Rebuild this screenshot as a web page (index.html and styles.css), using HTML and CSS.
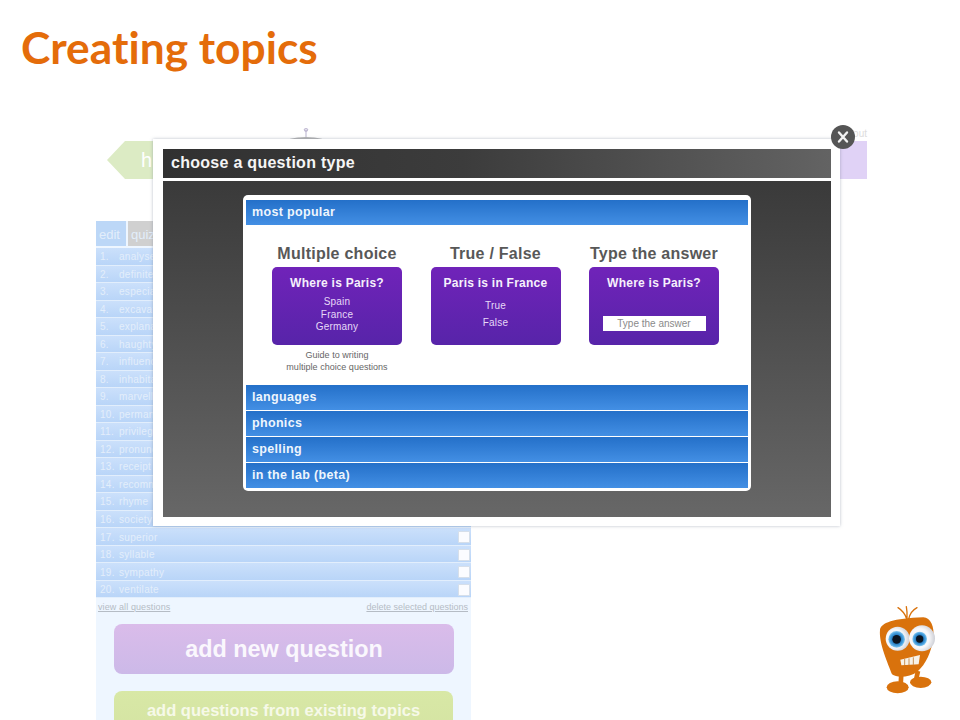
FILE: index.html
```html
<!DOCTYPE html>
<html lang="en">
<head>
<meta charset="utf-8">
<title>Creating topics</title>
<link rel="stylesheet" href="styles.css">
</head>
<body>
<main class="slide">
  <h1 class="slide-title">Creating topics</h1>

  <div class="app-nav">
    <div class="nav-home">h</div>
    <svg class="nav-logo" width="36" height="14" viewBox="0 0 36 14">
      <path d="M18 10V4M18 4l-2-2M18 4l2-2" stroke="#c4bed6" stroke-width="1.2" fill="none"/>
      <circle cx="18" cy="3" r="1.6" fill="none" stroke="#c4bed6"/>
      <ellipse cx="18" cy="16" rx="22" ry="6" fill="#b5b5b5"/>
    </svg>
    <div class="nav-end"><span class="nav-out">out</span><div class="nav-tab"></div></div>
  </div>

  <section class="app-panel">
    <div class="tabs"><span class="tab tab-edit">edit</span><span class="tab tab-quiz">quiz</span></div>
    <ol class="rows">
      <li class="row"><span class="num">1.</span><span class="word">analyse</span><i class="check"></i></li>
      <li class="row"><span class="num">2.</span><span class="word">definite</span><i class="check"></i></li>
      <li class="row"><span class="num">3.</span><span class="word">especially</span><i class="check"></i></li>
      <li class="row"><span class="num">4.</span><span class="word">excavate</span><i class="check"></i></li>
      <li class="row"><span class="num">5.</span><span class="word">explanation</span><i class="check"></i></li>
      <li class="row"><span class="num">6.</span><span class="word">haughty</span><i class="check"></i></li>
      <li class="row"><span class="num">7.</span><span class="word">influence</span><i class="check"></i></li>
      <li class="row"><span class="num">8.</span><span class="word">inhabitant</span><i class="check"></i></li>
      <li class="row"><span class="num">9.</span><span class="word">marvellous</span><i class="check"></i></li>
      <li class="row"><span class="num">10.</span><span class="word">permanent</span><i class="check"></i></li>
      <li class="row"><span class="num">11.</span><span class="word">privilege</span><i class="check"></i></li>
      <li class="row"><span class="num">12.</span><span class="word">pronunciation</span><i class="check"></i></li>
      <li class="row"><span class="num">13.</span><span class="word">receipt</span><i class="check"></i></li>
      <li class="row"><span class="num">14.</span><span class="word">recommend</span><i class="check"></i></li>
      <li class="row"><span class="num">15.</span><span class="word">rhyme</span><i class="check"></i></li>
      <li class="row"><span class="num">16.</span><span class="word">society</span><i class="check"></i></li>
      <li class="row"><span class="num">17.</span><span class="word">superior</span><i class="check"></i></li>
      <li class="row"><span class="num">18.</span><span class="word">syllable</span><i class="check"></i></li>
      <li class="row"><span class="num">19.</span><span class="word">sympathy</span><i class="check"></i></li>
      <li class="row"><span class="num">20.</span><span class="word">ventilate</span><i class="check"></i></li>
    </ol>
    <div class="list-links"><a class="link-all">view all questions</a><a>delete selected questions</a></div>
    <div class="actions">
      <div class="action action-new">add new question</div>
      <div class="action action-existing">add questions from existing topics</div>
    </div>
  </section>

  <section class="modal">
    <header class="modal-head">choose a question type</header>
    <div class="modal-body">
      <div class="sheet">
        <div class="bar">most popular</div>
        <div class="types">
          <div class="type">
            <h2 class="type-title">Multiple choice</h2>
            <div class="card">
              <div class="card-q">Where is Paris?</div>
              <div class="card-opts"><span>Spain</span><span>France</span><span>Germany</span></div>
            </div>
            <p class="guide">Guide to writing<br>multiple choice questions</p>
          </div>
          <div class="type">
            <h2 class="type-title">True / False</h2>
            <div class="card">
              <div class="card-q">Paris is in France</div>
              <div class="card-opts card-opts-tf"><span>True</span><span>False</span></div>
            </div>
          </div>
          <div class="type">
            <h2 class="type-title">Type the answer</h2>
            <div class="card">
              <div class="card-q">Where is Paris?</div>
              <div class="answer">Type the answer</div>
            </div>
          </div>
        </div>
        <div class="bars">
          <div class="bar">languages</div>
          <div class="bar">phonics</div>
          <div class="bar">spelling</div>
          <div class="bar">in the lab (beta)</div>
        </div>
      </div>
    </div>
  </section>

  <div class="close">
    <svg width="24" height="24" viewBox="0 0 24 24"><path d="M8 7.5l8 9M16 7.5l-8 9" stroke="#f2f2f2" stroke-width="2.4" stroke-linecap="round"/></svg>
  </div>

  <svg class="mascot" width="90" height="110" viewBox="0 0 270 330">
    <defs>
      <radialGradient id="iris">
        <stop offset="45%" stop-color="#1d6fb5"/>
        <stop offset="80%" stop-color="#4aa3e0"/>
        <stop offset="100%" stop-color="#8cc8ee"/>
      </radialGradient>
      <radialGradient id="white" cx="40%" cy="50%" r="62%">
        <stop offset="60%" stop-color="#f8f8fa"/>
        <stop offset="100%" stop-color="#c9cbd2"/>
      </radialGradient>
    </defs>
    <path d="M140 72C135 55 125 45 114 38M141 72C142 55 141 45 139 35M146 72C150 55 158 45 171 38" stroke="#d9720c" stroke-width="4" fill="none" stroke-linecap="round"/>
    <path d="M124 235L122 270M174 228L168 255" stroke="#d9720c" stroke-width="14"/>
    <ellipse cx="113" cy="277" rx="33" ry="18" fill="#d9720c"/>
    <ellipse cx="182" cy="262" rx="32" ry="17" fill="#d9720c"/>
    <path d="M60 105C62 84 100 70 190 67C212 68 224 95 220 130C214 170 198 208 172 230C150 246 112 250 96 238C84 205 56 145 60 105Z" fill="#d9720c"/>
    <circle cx="113" cy="131" r="36" fill="url(#white)"/>
    <circle cx="186" cy="130" r="39" fill="url(#white)"/>
    <circle cx="110" cy="133" r="25" fill="url(#iris)"/>
    <circle cx="110" cy="133" r="13" fill="#0b1420"/>
    <circle cx="179" cy="132" r="22" fill="url(#iris)"/>
    <circle cx="179" cy="132" r="11" fill="#0b1420"/>
    <path d="M121 194L180 180L176 208L124 211Z" fill="#f7f2e8"/>
    <path d="M134 192V211M147 190V210M160 187V209" stroke="#b56109" stroke-width="2"/>
  </svg>
</main>
</body>
</html>
```

FILE: styles.css
```css
* { box-sizing: border-box; }
html, body { margin: 0; padding: 0; background: #fff; }
body { width: 960px; height: 720px; overflow: hidden; font-family: "Liberation Sans", Arial, sans-serif; }

.slide { position: relative; width: 960px; height: 720px; overflow: hidden; }
.slide-title {
  margin: 0;
  padding: 20px 0 0 21px;
  font: 700 44.3px/54px Lato, "Open Sans", sans-serif;
  font-variant-ligatures: none;
  color: #e46c0a;
}

/* background application, faded behind the dialog */
.app-nav {
  position: absolute; left: 107px; top: 127px; width: 760px; height: 52px;
  display: flex; justify-content: space-between; align-items: flex-start;
}
.nav-home {
  width: 60px; height: 38px; margin-top: 14px; padding-left: 34px;
  background: #dcebc4;
  clip-path: polygon(0 50%, 18px 0, 100% 0, 100% 100%, 18px 100%);
  color: #fff; font-size: 20px; line-height: 38px;
}
.nav-logo { position: absolute; left: 181px; top: 0; overflow: visible; }
.nav-end { display: flex; flex-direction: column; align-items: flex-end; }
.nav-out { font-size: 10px; line-height: 14px; color: #ddd; }
.nav-tab { width: 50px; height: 38px; background: #e0d2f6; }

.app-panel { position: absolute; left: 96px; top: 221px; width: 375px; background: #eef6ff; height: 520px; }
.tabs { display: flex; gap: 2px; height: 25px; margin-bottom: 2px; }
.tab { padding: 0 3px; font-size: 13px; line-height: 27px; color: #e3eefb; }
.tab-edit { width: 30px; background: #bcd7f7; }
.tab-quiz { width: 60px; background: #d0d0d0; }
.rows { list-style: none; margin: 0; padding: 0; }
.row {
  display: flex; align-items: center; height: 17.53px;
  padding: 1px 1px 0 4px;
  border-bottom: 1px solid #e2eefc;
  background: linear-gradient(#cbe0fb, #b9d5f8);
  font-size: 10px; color: #e3eefb;
  letter-spacing: .3px;
}
.num { width: 19px; }
.word { flex: 1; }
.check { width: 12px; height: 12px; background: #fbfcff; border: 1px solid #d6dfea; border-radius: 1px; }
.list-links { display: flex; justify-content: space-between; padding: 3px 3px 0 2px; font-size: 9px; line-height: 13px; color: #b5bcc5; }
.list-links a { text-decoration: underline; }
.link-all { letter-spacing: .1px; }
.actions { display: flex; flex-direction: column; gap: 17px; padding: 10px 17px 0 18px; }
.action { border-radius: 8px; text-align: center; font-weight: 700; }
.action-new { height: 50px; font-size: 23.4px; line-height: 50px; background: linear-gradient(#dabcea, #ccb9e8); color: #faf7fd; }
.action-existing { height: 50px; width: 339px; font-size: 16.5px; line-height: 38px; background: linear-gradient(#d8e8a6, #d4e3a2); color: #f6f9e8; }

/* dialog */
.modal {
  position: absolute; left: 153px; top: 139px; width: 687px; height: 387px;
  padding: 10px 9px 9px 10px;
  background: #fff;
  box-shadow: 0 0 3px rgba(120, 130, 150, .5);
  display: flex; flex-direction: column; gap: 3px;
}
.modal-head {
  height: 29px; padding-left: 8px; flex: none;
  background: linear-gradient(90deg, #313131, #3c3c3c 45%, #636363);
  color: #f5f5f5; font-size: 16px; font-weight: 700; line-height: 27px; letter-spacing: .28px;
}
.modal-body {
  flex: 1; padding: 14px 80px 26px;
  background: linear-gradient(#3a3a3a, #676767);
}
.sheet {
  height: 296px; padding: 5px 3px 3px;
  background: #fff; border-radius: 5px;
  display: flex; flex-direction: column;
}
.bar {
  height: 25px; padding-left: 6px;
  background: linear-gradient(#2470c9, #438fe4);
  color: #eef5fd; font-size: 12.5px; font-weight: 700; line-height: 24px; letter-spacing: .33px;
}
.types { display: flex; height: 160px; padding: 19px 28px 0 26px; gap: 28.5px; }
.type { width: 130px; display: flex; flex-direction: column; align-items: center; }
.type-title { margin: 0 -10px 3px; height: 20px; white-space: nowrap; font-size: 16px; line-height: 20px; font-weight: 700; letter-spacing: .25px; color: #585858; }
.card {
  width: 130px; height: 78px; padding-top: 9px;
  border-radius: 5px; text-align: center;
  background: linear-gradient(#7023b9, #5724a9);
  color: #e6d9f7;
}
.card-q { font-size: 12px; line-height: 15px; font-weight: 700; letter-spacing: .25px; color: #f6f0fc; }
.card-opts { display: flex; flex-direction: column; margin-top: 5px; font-size: 10px; line-height: 12.5px; letter-spacing: .2px; }
.card-opts-tf { gap: 4.5px; margin-top: 9px; }
.answer {
  width: 103px; height: 15px; margin: 25px auto 0;
  background: #fff; color: #8a8a8a; font-size: 10px; line-height: 15px;
}
.guide { margin: 4px -10px 0; text-align: center; font-size: 9px; line-height: 12px; letter-spacing: .03px; color: #666; }
.bars { display: flex; flex-direction: column; gap: 1px; margin-top: 0; }

.close {
  position: absolute; left: 831px; top: 125px; width: 24px; height: 24px;
  border-radius: 50%; background: #555;
}
.close svg { display: block; }
.mascot { position: absolute; left: 860px; top: 595px; }
```
